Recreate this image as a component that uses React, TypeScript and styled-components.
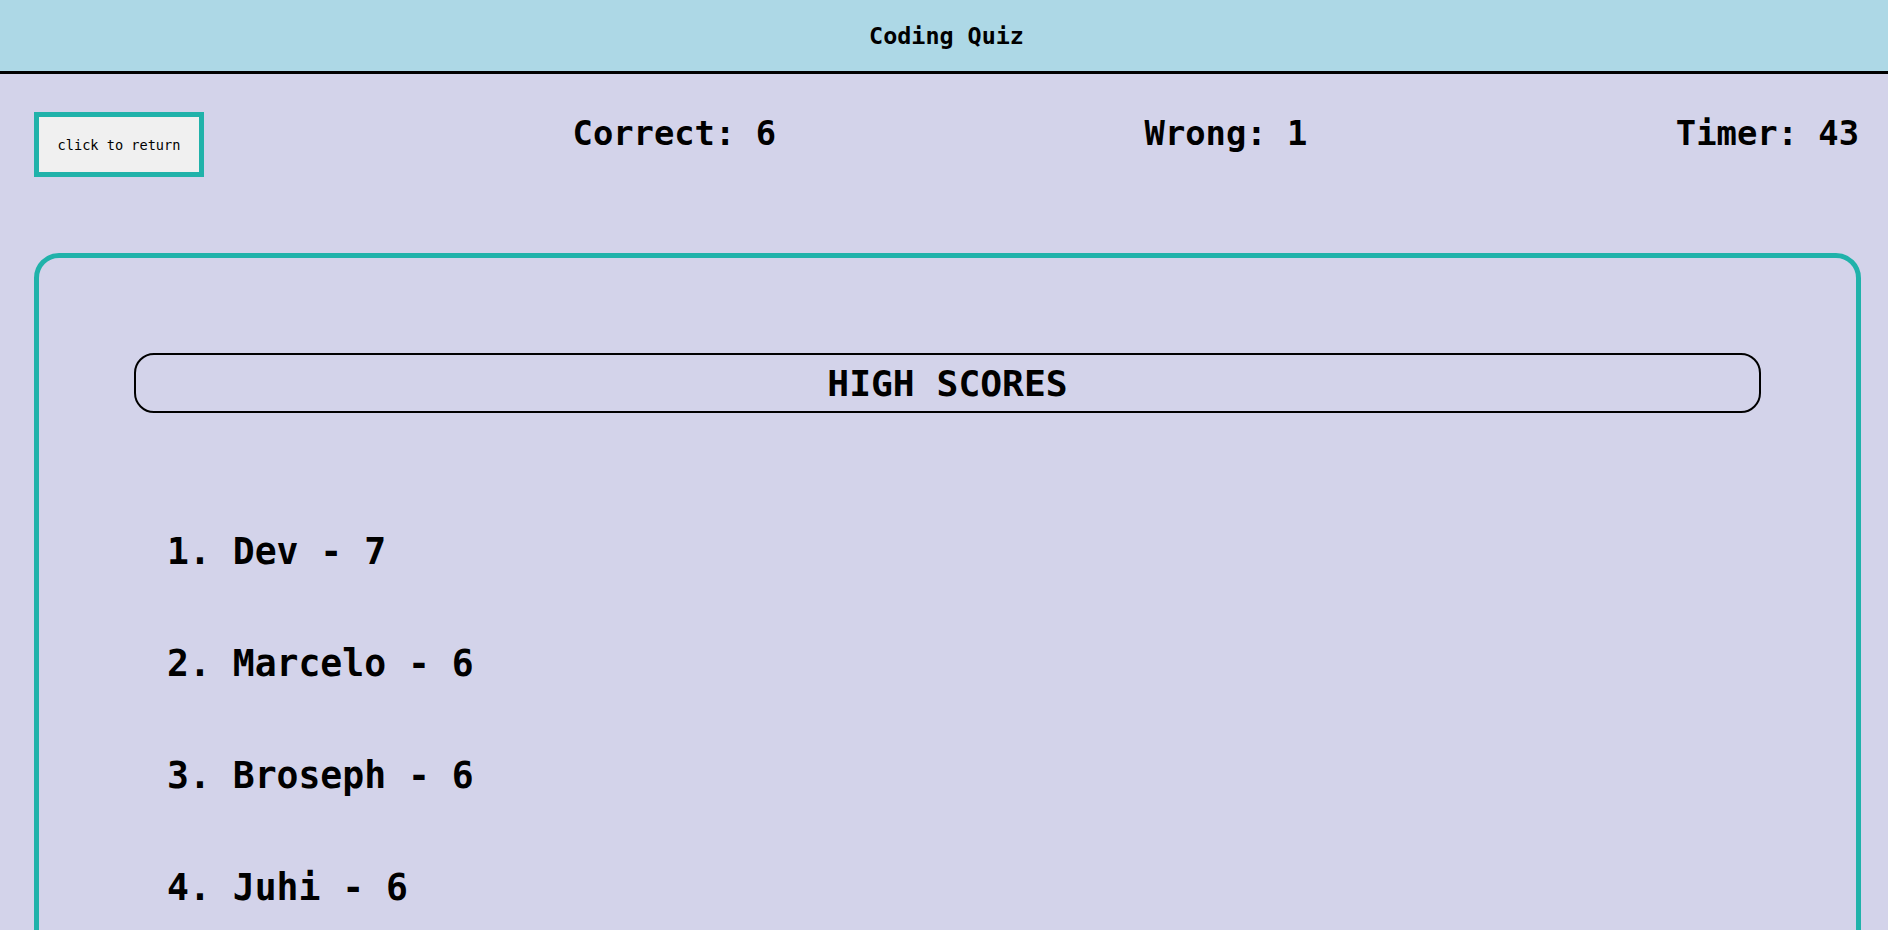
import React from "react";
import styled, { createGlobalStyle } from "styled-components";

const GlobalStyle = createGlobalStyle`
  html, body {
    margin: 0;
    padding: 0;
    background: #d3d3ea;
    font-family: "DejaVu Sans Mono", "Liberation Mono", monospace;
    color: #000;
  }
  html { scrollbar-width: none; }
  ::-webkit-scrollbar { display: none; }
  * { box-sizing: border-box; }
`;

const Page = styled.div`
  min-height: 100vh;
  background: #d3d3ea;
`;

const Header = styled.header`
  height: 74px;
  background: #add8e6;
  border-bottom: 3px solid #000;
  display: flex;
  align-items: center;
  justify-content: center;
  padding-left: 5px;
`;

const Title = styled.h1`
  margin: 0;
  font-size: 23.4px;
  font-weight: bold;
  line-height: 28px;
`;

const StatusBar = styled.div`
  display: flex;
  justify-content: space-between;
  align-items: flex-start;
  padding: 38px 29px 0 34px;
`;

const ReturnButton = styled.button`
  width: 170px;
  height: 65px;
  border: 5px solid #20b2aa;
  background: #f0f0f0;
  font-family: "DejaVu Sans Mono", "Liberation Mono", monospace;
  font-size: 13.6px;
  color: #000;
  padding: 0;
  cursor: pointer;
`;

const Stat = styled.h2`
  margin: 2px 0 0;
  font-size: 33.8px;
  font-weight: bold;
  line-height: 40px;
  white-space: pre;
`;

const Card = styled.section`
  margin: 76px 27px 0 34px;
  border: 5px solid #20b2aa;
  border-radius: 25px;
  padding: 95px 95px 200px;
  min-height: 900px;
`;

const ScoresTitle = styled.h2`
  margin: 0;
  height: 60px;
  border: 2px solid #000;
  border-radius: 20px;
  display: flex;
  align-items: center;
  justify-content: center;
  font-size: 36.3px;
  font-weight: bold;
`;

const ScoreList = styled.ul`
  list-style: none;
  margin: 117px 0 0;
  padding: 0 0 0 33px;
  display: flex;
  flex-direction: column;
  gap: 68px;
`;

const ScoreItem = styled.li`
  font-size: 36.4px;
  font-weight: bold;
  line-height: 44px;
  white-space: pre;
`;

const scores = [
  { name: "Dev", score: 7 },
  { name: "Marcelo", score: 6 },
  { name: "Broseph", score: 6 },
  { name: "Juhi", score: 6 },
];

export default function App() {
  return (
    <Page>
      <GlobalStyle />
      <Header>
        <Title>Coding Quiz</Title>
      </Header>
      <StatusBar>
        <ReturnButton>click to return</ReturnButton>
        <Stat>Correct: 6</Stat>
        <Stat>Wrong: 1</Stat>
        <Stat>Timer: 43</Stat>
      </StatusBar>
      <Card>
        <ScoresTitle>HIGH SCORES</ScoresTitle>
        <ScoreList>
          {scores.map((s, i) => (
            <ScoreItem key={s.name}>{`${i + 1}. ${s.name} - ${s.score}`}</ScoreItem>
          ))}
        </ScoreList>
      </Card>
    </Page>
  );
}
